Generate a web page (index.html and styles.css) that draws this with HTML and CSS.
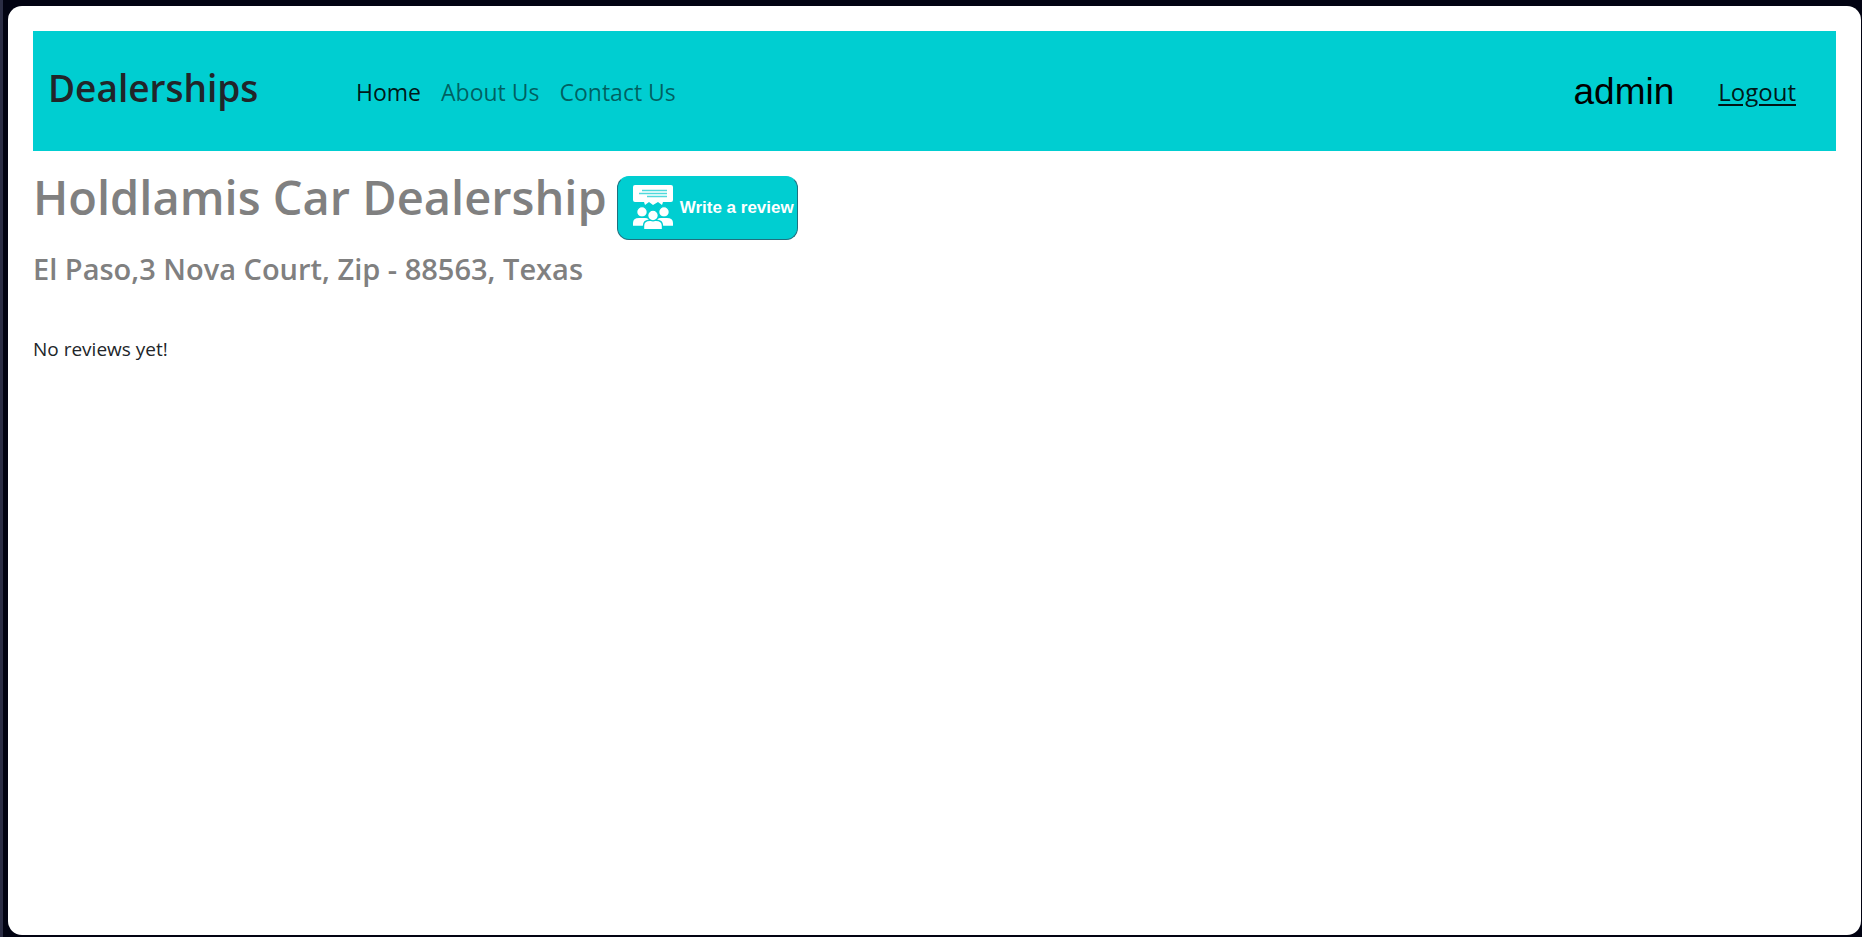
FILE: index.html
```html
<!DOCTYPE html>
<html lang="en">
<head>
<meta charset="utf-8">
<meta name="viewport" content="width=device-width, initial-scale=1">
<title>Dealerships</title>
<link rel="stylesheet" href="styles.css">
</head>
<body>
<div class="window">
  <header class="navbar">
    <h2 class="brand">Dealerships</h2>
    <nav class="nav-links">
      <a class="nav-link active" href="#">Home</a>
      <a class="nav-link" href="#">About Us</a>
      <a class="nav-link" href="#">Contact Us</a>
    </nav>
    <div class="account">
      <span class="username">admin</span>
      <a class="logout" href="#">Logout</a>
    </div>
  </header>
  <main>
    <div class="title-row">
      <h1 class="title">Holdlamis Car Dealership</h1>
      <a class="review-button" href="#">
        <svg class="review-icon" viewBox="0 0 40 44" aria-hidden="true">
          <path fill="#fff" d="M2 0H38Q40 0 40 2V15Q40 17 38 17H30L29 20L25 17L20 20L16 17L12 20L11 17H2Q0 17 0 15V2Q0 0 2 0Z"/>
          <path stroke="#4fd9dc" stroke-width="1.3" d="M9 5.5H34M6 8.5H34M14 11.5H34"/>
          <g fill="#fff" stroke="#00ced1" stroke-width="1.4">
            <circle cx="9" cy="27" r="5.4"/>
            <circle cx="31" cy="27" r="5.4"/>
            <path d="M-.7 41.5V38Q-.7 32.3 6 32.3H12Q18 32.3 18 38V41.5Z"/>
            <path d="M22 41.5V38Q22 32.3 28 32.3H34Q40.7 32.3 40.7 38V41.5Z"/>
            <path d="M10.5 44.7V41Q10.5 35.3 17 35.3H23Q29.5 35.3 29.5 41V44.7Z"/>
            <circle cx="20" cy="30.5" r="5.4"/>
          </g>
        </svg>
        <span>Write a review</span>
      </a>
    </div>
    <h4 class="address">El Paso,3 Nova Court, Zip - 88563, Texas</h4>
    <p class="empty">No reviews yet!</p>
  </main>
</div>
</body>
</html>
```
FILE: styles.css
```css
* { box-sizing: border-box; }

body {
  min-height: 100vh;
  margin: 0;
  padding: 6px 1px 2px 5px;
  display: flex;
  border-left: 3px solid #2b2d45;
  background: #020312;
  color: #212529;
  font-family: "Segoe UI", "Open Sans", "Noto Sans", sans-serif;
  font-size: 19px;
}

h1, h2, h4, p { margin: 0; }

.window {
  flex: 1;
  padding: 25px;
  border-radius: 14px;
  background: #fff;
}

.navbar {
  display: flex;
  align-items: center;
  height: 120px;
  padding: 2px 40px 0 15px;
  background: #00ced1;
}

.brand {
  width: 308px;
  padding-bottom: 8px;
  font-size: 37px;
  line-height: 48px;
  font-weight: 600;
}

.nav-links { display: flex; gap: 20px; }

.nav-link {
  color: rgba(0, 0, 0, .55);
  font-size: 23px;
  line-height: 36px;
  text-decoration: none;
}

.nav-link.active { color: rgba(0, 0, 0, .9); }

.account {
  display: flex;
  align-items: center;
  gap: 44px;
  margin-left: auto;
}

.username {
  color: #000;
  font-family: "Liberation Sans", Arial, sans-serif;
  font-size: 37px;
  line-height: 48px;
}

.logout {
  color: rgba(0, 0, 0, .9);
  font-size: 24px;
  line-height: 36px;
  text-underline-offset: 3px;
}

.title-row {
  display: flex;
  align-items: flex-start;
  gap: 10px;
  padding-top: 12px;
}

.title {
  color: #808080;
  font-size: 47px;
  line-height: 68px;
  font-weight: 600;
}

.review-button {
  display: flex;
  align-items: center;
  gap: 7px;
  height: 64px;
  margin-top: 13px;
  padding: 0 3px 0 15px;
  border: 1px solid #20707f;
  border-top-color: #00ced1;
  border-radius: 12px;
  background: #00ced1;
  color: #fff;
  font: bold 17px/24px "Liberation Sans", Arial, sans-serif;
  text-decoration: none;
  white-space: nowrap;
}

.review-icon {
  width: 40px;
  height: 44px;
  margin-bottom: 2px;
}

.address {
  margin-top: 9px;
  color: #808080;
  font-size: 29px;
  line-height: 40px;
  font-weight: 600;
}

.empty {
  margin-top: 45px;
  line-height: 30px;
}
```
